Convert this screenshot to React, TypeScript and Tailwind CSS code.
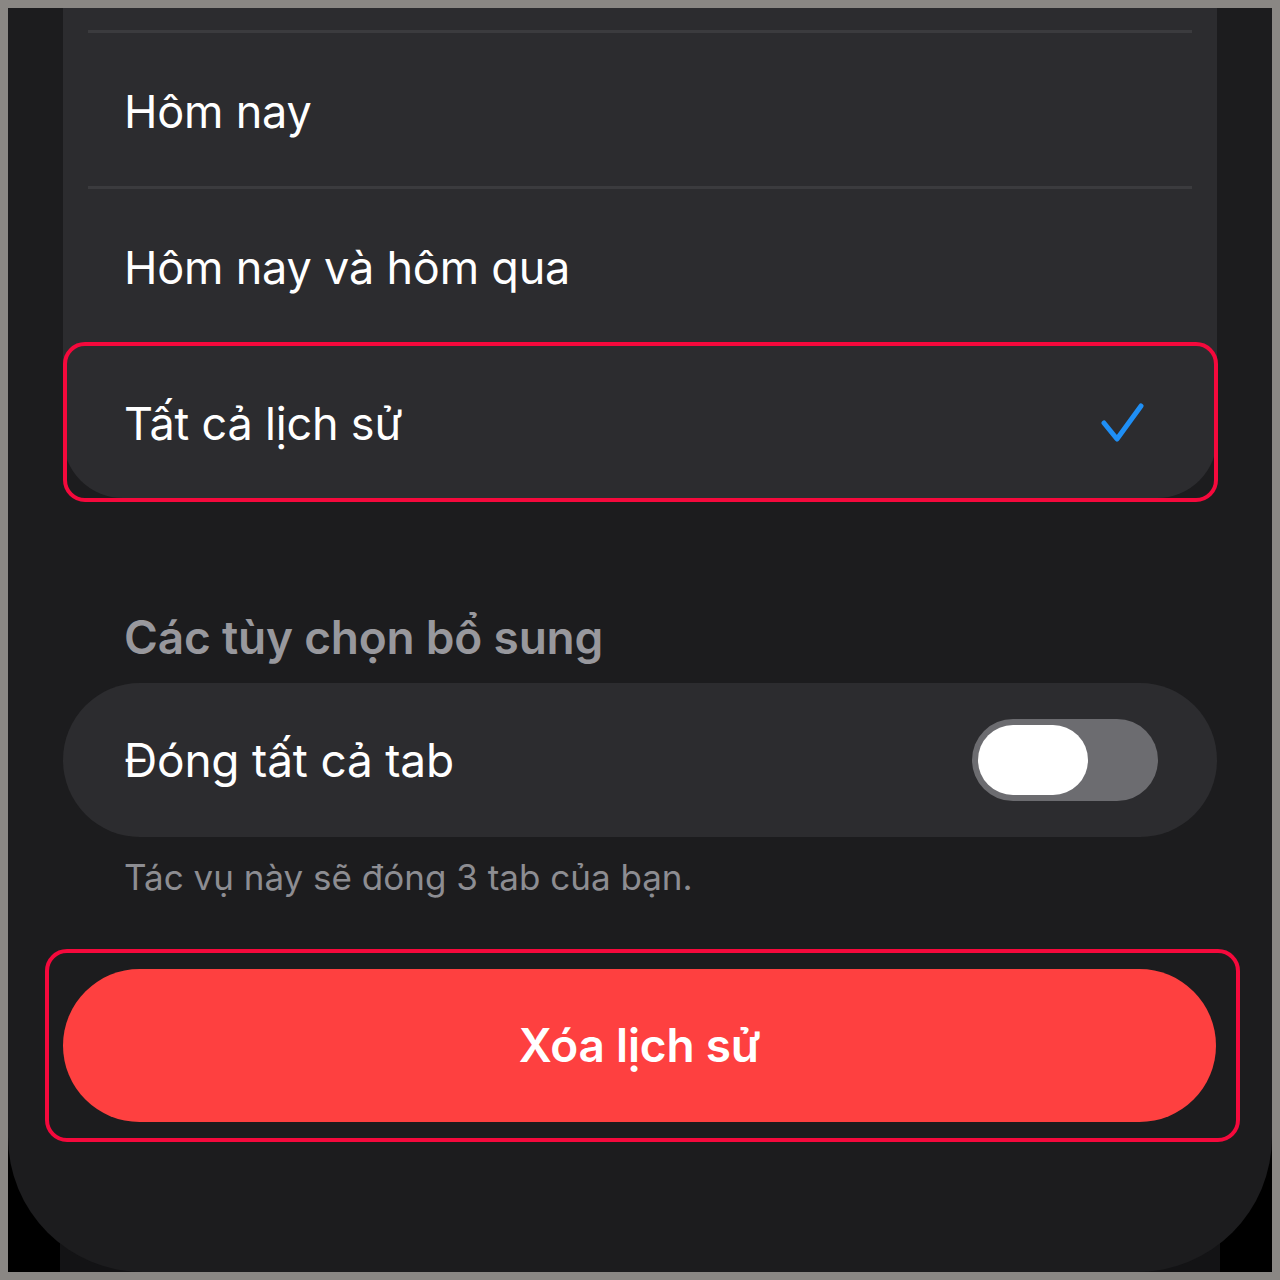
import React from 'react';

const font = { fontFamily: 'Inter, "Noto Sans", sans-serif' };

const Row = ({ label, checked, last }: { label: string; checked?: boolean; last?: boolean }) => (
  <div className="relative">
    <div className="flex h-[153px] items-center justify-between pt-[5px] pl-[61px] pr-[72px]">
      <span className="text-[45px] text-white tracking-[-0.2px]">{label}</span>
      {checked && (
        <svg width="44" height="44" viewBox="0 0 44 44" fill="none">
          <polyline
            points="3,21 16,37 40,4"
            stroke="#1f8ff5"
            strokeWidth="5"
            strokeLinecap="round"
            strokeLinejoin="round"
          />
        </svg>
      )}
    </div>
    {!last && <div className="mx-[25px] h-[3px] bg-[#3b3b3e]" />}
  </div>
);

export default function App() {
  return (
    <div className="w-[1280px] h-[1280px] bg-[#8a8784] p-[8px]" style={font}>
      <div className="relative h-full bg-black overflow-hidden">
        <div className="absolute left-[52px] right-[52px] bottom-0 h-[200px] bg-[#131315]" />
        <div className="relative h-full bg-[#1c1c1e] rounded-b-[135px]">
          {/* options card, top cut off */}
          <div className="relative mx-[55px] bg-[#2c2c2f] rounded-b-[60px]">
            <div className="h-[22px]" />
            <div className="mx-[25px] h-[3px] bg-[#3b3b3e]" />
            <Row label="Hôm nay" />
            <Row label="Hôm nay và hôm qua" />
            <Row label="Tất cả lịch sử" checked last />
            <div className="absolute left-0 right-[-1px] bottom-[-4px] h-[160px] border-[4px] border-[#f5093c] rounded-[22px] pointer-events-none" />
          </div>

          <div className="mt-[111px] pl-[116px] text-[46px] font-semibold text-[#98989d] leading-[56px] tracking-[-0.2px]">
            Các tùy chọn bổ sung
          </div>

          <div className="mt-[18px] mx-[55px] h-[154px] rounded-[77px] bg-[#2c2c2f] flex items-center justify-between pl-[61px] pr-[59px]">
            <span className="text-[46px] text-white tracking-[-0.2px]">Đóng tất cả tab</span>
            <div className="w-[186px] h-[82px] rounded-full bg-[#6c6c70] p-[6px] flex items-center">
              <div className="w-[110px] h-[70px] rounded-full bg-white" />
            </div>
          </div>

          <div className="mt-[18px] pl-[116px] text-[35px] text-[#8d8d92] leading-[44px]">
            Tác vụ này sẽ đóng 3 tab của bạn.
          </div>

          <div className="mt-[50px] ml-[37px] mr-[32px] border-[4px] border-[#f5093c] rounded-[22px] pt-[16px] pb-[16px] pl-[14px] pr-[20px]">
            <div className="h-[153px] rounded-full bg-[#fe4040] flex items-center justify-center">
              <span className="text-[46px] font-semibold text-white tracking-[-0.2px]">Xóa lịch sử</span>
            </div>
          </div>
        </div>
      </div>
    </div>
  );
}
